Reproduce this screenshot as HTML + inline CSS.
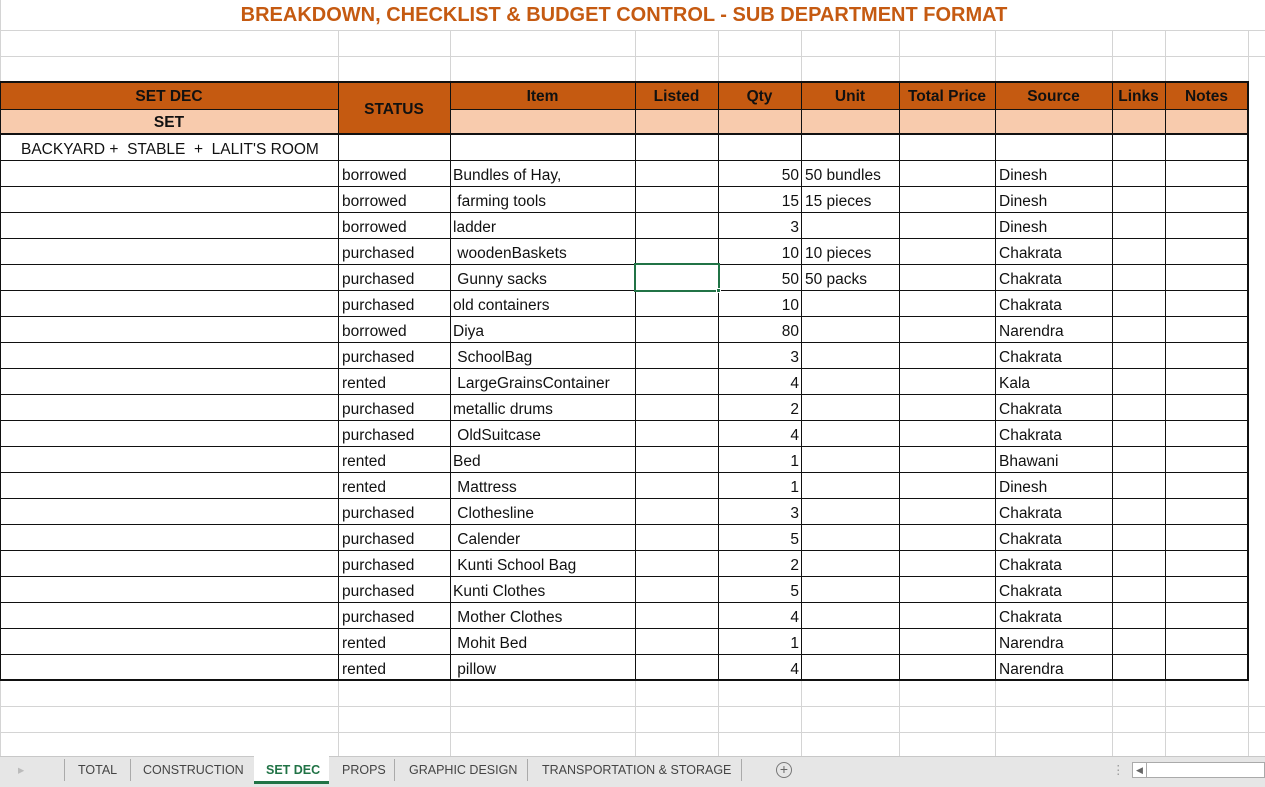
<!DOCTYPE html>
<html><head><meta charset="utf-8"><style>
*{margin:0;padding:0;box-sizing:border-box}
body{width:1265px;height:787px;background:#fff;position:relative;overflow:hidden;font-family:"Liberation Sans",Calibri,sans-serif;font-size:15.5px;color:#111}
.h{position:absolute;left:0;height:1px}
.v{position:absolute;width:1px}
.g{background:#d4d4d4}.k{background:#111}
.fill{position:absolute}
.r{position:absolute;left:0;width:1248px;height:26px;line-height:26px}
.r i{font-style:normal;position:absolute;top:2px;white-space:nowrap}
.s{left:342px}.it{left:453px}.q{right:449px;text-align:right}.u{left:805px}.src{left:999px}
.hd{position:absolute;font-weight:bold;text-align:center;color:#111}
.tab{position:absolute;top:762px;font-size:12.5px;color:#444;line-height:16px}
</style></head><body>
<div style="position:absolute;top:4px;left:0;width:1248px;text-align:center;color:#c55a11;font-weight:bold;font-size:20px;">BREAKDOWN, CHECKLIST &amp; BUDGET CONTROL - SUB DEPARTMENT FORMAT</div>
<div class="fill" style="left:0;top:82px;width:1248px;height:27px;background:#c55a11"></div>
<div class="fill" style="left:0;top:109px;width:1248px;height:25px;background:#f8cbad"></div>
<div class="fill" style="left:338px;top:109px;width:112px;height:25px;background:#c55a11"></div>
<div class="h g" style="top:30px;width:1265px"></div>
<div class="h g" style="top:56px;width:1265px"></div>
<div class="h g" style="top:706px;width:1265px"></div>
<div class="h g" style="top:732px;width:1265px"></div>
<div class="v g" style="left:0;top:0;height:756px"></div>
<div class="v g" style="left:338px;top:30px;height:52px"></div><div class="v g" style="left:450px;top:30px;height:52px"></div><div class="v g" style="left:635px;top:30px;height:52px"></div><div class="v g" style="left:718px;top:30px;height:52px"></div><div class="v g" style="left:801px;top:30px;height:52px"></div><div class="v g" style="left:899px;top:30px;height:52px"></div><div class="v g" style="left:995px;top:30px;height:52px"></div><div class="v g" style="left:1112px;top:30px;height:52px"></div><div class="v g" style="left:1165px;top:30px;height:52px"></div><div class="v g" style="left:1248px;top:30px;height:52px"></div>
<div class="v g" style="left:338px;top:680px;height:76px"></div><div class="v g" style="left:450px;top:680px;height:76px"></div><div class="v g" style="left:635px;top:680px;height:76px"></div><div class="v g" style="left:718px;top:680px;height:76px"></div><div class="v g" style="left:801px;top:680px;height:76px"></div><div class="v g" style="left:899px;top:680px;height:76px"></div><div class="v g" style="left:995px;top:680px;height:76px"></div><div class="v g" style="left:1112px;top:680px;height:76px"></div><div class="v g" style="left:1165px;top:680px;height:76px"></div><div class="v g" style="left:1248px;top:680px;height:76px"></div>
<div class="h k" style="top:81px;width:1249px;height:2px"></div>
<div class="h k" style="top:109px;width:338px"></div>
<div class="h k" style="left:450px;top:109px;width:798px"></div>
<div class="h k" style="top:133px;width:1249px;height:2px"></div>
<div class="h k" style="top:160px;width:1248px"></div><div class="h k" style="top:186px;width:1248px"></div><div class="h k" style="top:212px;width:1248px"></div><div class="h k" style="top:238px;width:1248px"></div><div class="h k" style="top:264px;width:1248px"></div><div class="h k" style="top:290px;width:1248px"></div><div class="h k" style="top:316px;width:1248px"></div><div class="h k" style="top:342px;width:1248px"></div><div class="h k" style="top:368px;width:1248px"></div><div class="h k" style="top:394px;width:1248px"></div><div class="h k" style="top:420px;width:1248px"></div><div class="h k" style="top:446px;width:1248px"></div><div class="h k" style="top:472px;width:1248px"></div><div class="h k" style="top:498px;width:1248px"></div><div class="h k" style="top:524px;width:1248px"></div><div class="h k" style="top:550px;width:1248px"></div><div class="h k" style="top:576px;width:1248px"></div><div class="h k" style="top:602px;width:1248px"></div><div class="h k" style="top:628px;width:1248px"></div><div class="h k" style="top:654px;width:1248px"></div>
<div class="h k" style="top:679px;width:1249px;height:2px"></div>
<div class="v k" style="left:0;top:82px;height:598px"></div>
<div class="v k" style="left:338px;top:82px;height:598px"></div><div class="v k" style="left:450px;top:82px;height:598px"></div><div class="v k" style="left:635px;top:82px;height:598px"></div><div class="v k" style="left:718px;top:82px;height:598px"></div><div class="v k" style="left:801px;top:82px;height:598px"></div><div class="v k" style="left:899px;top:82px;height:598px"></div><div class="v k" style="left:995px;top:82px;height:598px"></div><div class="v k" style="left:1112px;top:82px;height:598px"></div><div class="v k" style="left:1165px;top:82px;height:598px"></div>
<div class="v k" style="left:1247px;top:82px;height:599px;width:2px"></div>
<div class="hd" style="left:0;top:88px;width:338px">SET DEC</div>
<div class="hd" style="left:0;top:114px;width:338px">SET</div>
<div class="hd" style="left:338px;top:101px;width:112px">STATUS</div>
<div class="hd" style="left:450px;top:88px;width:185px">Item</div>
<div class="hd" style="left:635px;top:88px;width:83px">Listed</div>
<div class="hd" style="left:718px;top:88px;width:83px">Qty</div>
<div class="hd" style="left:801px;top:88px;width:98px">Unit</div>
<div class="hd" style="left:899px;top:88px;width:96px">Total Price</div>
<div class="hd" style="left:995px;top:88px;width:117px">Source</div>
<div class="hd" style="left:1112px;top:88px;width:53px">Links</div>
<div class="hd" style="left:1165px;top:88px;width:83px">Notes</div>
<div class="r" style="top:135px"><i style="left:21px">BACKYARD +&nbsp; STABLE&nbsp; +&nbsp; LALIT'S ROOM</i></div>
<div class="r" style="top:161px"><i class="s">borrowed</i><i class="it">Bundles of Hay,</i><i class="q">50</i><i class="u">50 bundles</i><i class="src">Dinesh</i></div>
<div class="r" style="top:187px"><i class="s">borrowed</i><i class="it">&nbsp;farming tools</i><i class="q">15</i><i class="u">15 pieces</i><i class="src">Dinesh</i></div>
<div class="r" style="top:213px"><i class="s">borrowed</i><i class="it">ladder</i><i class="q">3</i><i class="src">Dinesh</i></div>
<div class="r" style="top:239px"><i class="s">purchased</i><i class="it">&nbsp;woodenBaskets</i><i class="q">10</i><i class="u">10 pieces</i><i class="src">Chakrata</i></div>
<div class="r" style="top:265px"><i class="s">purchased</i><i class="it">&nbsp;Gunny sacks</i><i class="q">50</i><i class="u">50 packs</i><i class="src">Chakrata</i></div>
<div class="r" style="top:291px"><i class="s">purchased</i><i class="it">old containers</i><i class="q">10</i><i class="src">Chakrata</i></div>
<div class="r" style="top:317px"><i class="s">borrowed</i><i class="it">Diya</i><i class="q">80</i><i class="src">Narendra</i></div>
<div class="r" style="top:343px"><i class="s">purchased</i><i class="it">&nbsp;SchoolBag</i><i class="q">3</i><i class="src">Chakrata</i></div>
<div class="r" style="top:369px"><i class="s">rented</i><i class="it">&nbsp;LargeGrainsContainer</i><i class="q">4</i><i class="src">Kala</i></div>
<div class="r" style="top:395px"><i class="s">purchased</i><i class="it">metallic drums</i><i class="q">2</i><i class="src">Chakrata</i></div>
<div class="r" style="top:421px"><i class="s">purchased</i><i class="it">&nbsp;OldSuitcase</i><i class="q">4</i><i class="src">Chakrata</i></div>
<div class="r" style="top:447px"><i class="s">rented</i><i class="it">Bed</i><i class="q">1</i><i class="src">Bhawani</i></div>
<div class="r" style="top:473px"><i class="s">rented</i><i class="it">&nbsp;Mattress</i><i class="q">1</i><i class="src">Dinesh</i></div>
<div class="r" style="top:499px"><i class="s">purchased</i><i class="it">&nbsp;Clothesline</i><i class="q">3</i><i class="src">Chakrata</i></div>
<div class="r" style="top:525px"><i class="s">purchased</i><i class="it">&nbsp;Calender</i><i class="q">5</i><i class="src">Chakrata</i></div>
<div class="r" style="top:551px"><i class="s">purchased</i><i class="it">&nbsp;Kunti School Bag</i><i class="q">2</i><i class="src">Chakrata</i></div>
<div class="r" style="top:577px"><i class="s">purchased</i><i class="it">Kunti Clothes</i><i class="q">5</i><i class="src">Chakrata</i></div>
<div class="r" style="top:603px"><i class="s">purchased</i><i class="it">&nbsp;Mother Clothes</i><i class="q">4</i><i class="src">Chakrata</i></div>
<div class="r" style="top:629px"><i class="s">rented</i><i class="it">&nbsp;Mohit Bed</i><i class="q">1</i><i class="src">Narendra</i></div>
<div class="r" style="top:655px"><i class="s">rented</i><i class="it">&nbsp;pillow</i><i class="q">4</i><i class="src">Narendra</i></div>
<div style="position:absolute;left:634px;top:263px;width:86px;height:29px;border:2px solid #217346"></div>
<div style="position:absolute;left:716px;top:288px;width:5px;height:5px;background:#217346;border:1px solid #fff"></div>
<div style="position:absolute;left:0;top:756px;width:1265px;height:31px;background:#e6e6e6;border-top:1px solid #c8c8c8"></div>
<div class="tab" style="left:18px;color:#bbb">&#9656;</div>
<div class="v" style="left:64px;top:759px;height:22px;background:#aaa"></div>
<div class="tab" style="left:78px">TOTAL</div>
<div class="v" style="left:130px;top:759px;height:22px;background:#aaa"></div>
<div class="tab" style="left:143px">CONSTRUCTION</div>
<div style="position:absolute;left:254px;top:756px;width:75px;height:28px;background:#fff;border-bottom:3px solid #217346"></div>
<div class="tab" style="left:266px;color:#217346;font-weight:bold">SET DEC</div>
<div class="tab" style="left:342px">PROPS</div>
<div class="v" style="left:394px;top:759px;height:22px;background:#aaa"></div>
<div class="tab" style="left:409px">GRAPHIC DESIGN</div>
<div class="v" style="left:527px;top:759px;height:22px;background:#aaa"></div>
<div class="tab" style="left:542px">TRANSPORTATION &amp; STORAGE</div>
<div class="v" style="left:741px;top:759px;height:22px;background:#aaa"></div>
<div style="position:absolute;left:776px;top:762px;width:16px;height:16px;border:1px solid #777;border-radius:50%;text-align:center;line-height:13px;font-size:14px;color:#666">+</div>
<div class="tab" style="left:1112px;color:#999">&#8942;</div>
<div style="position:absolute;left:1132px;top:762px;width:133px;height:16px;background:#fff;border:1px solid #aaa"></div>
<div style="position:absolute;left:1133px;top:763px;width:14px;height:14px;border-right:1px solid #aaa;font-size:9px;color:#666;text-align:center;line-height:14px">&#9664;</div>
</body></html>
